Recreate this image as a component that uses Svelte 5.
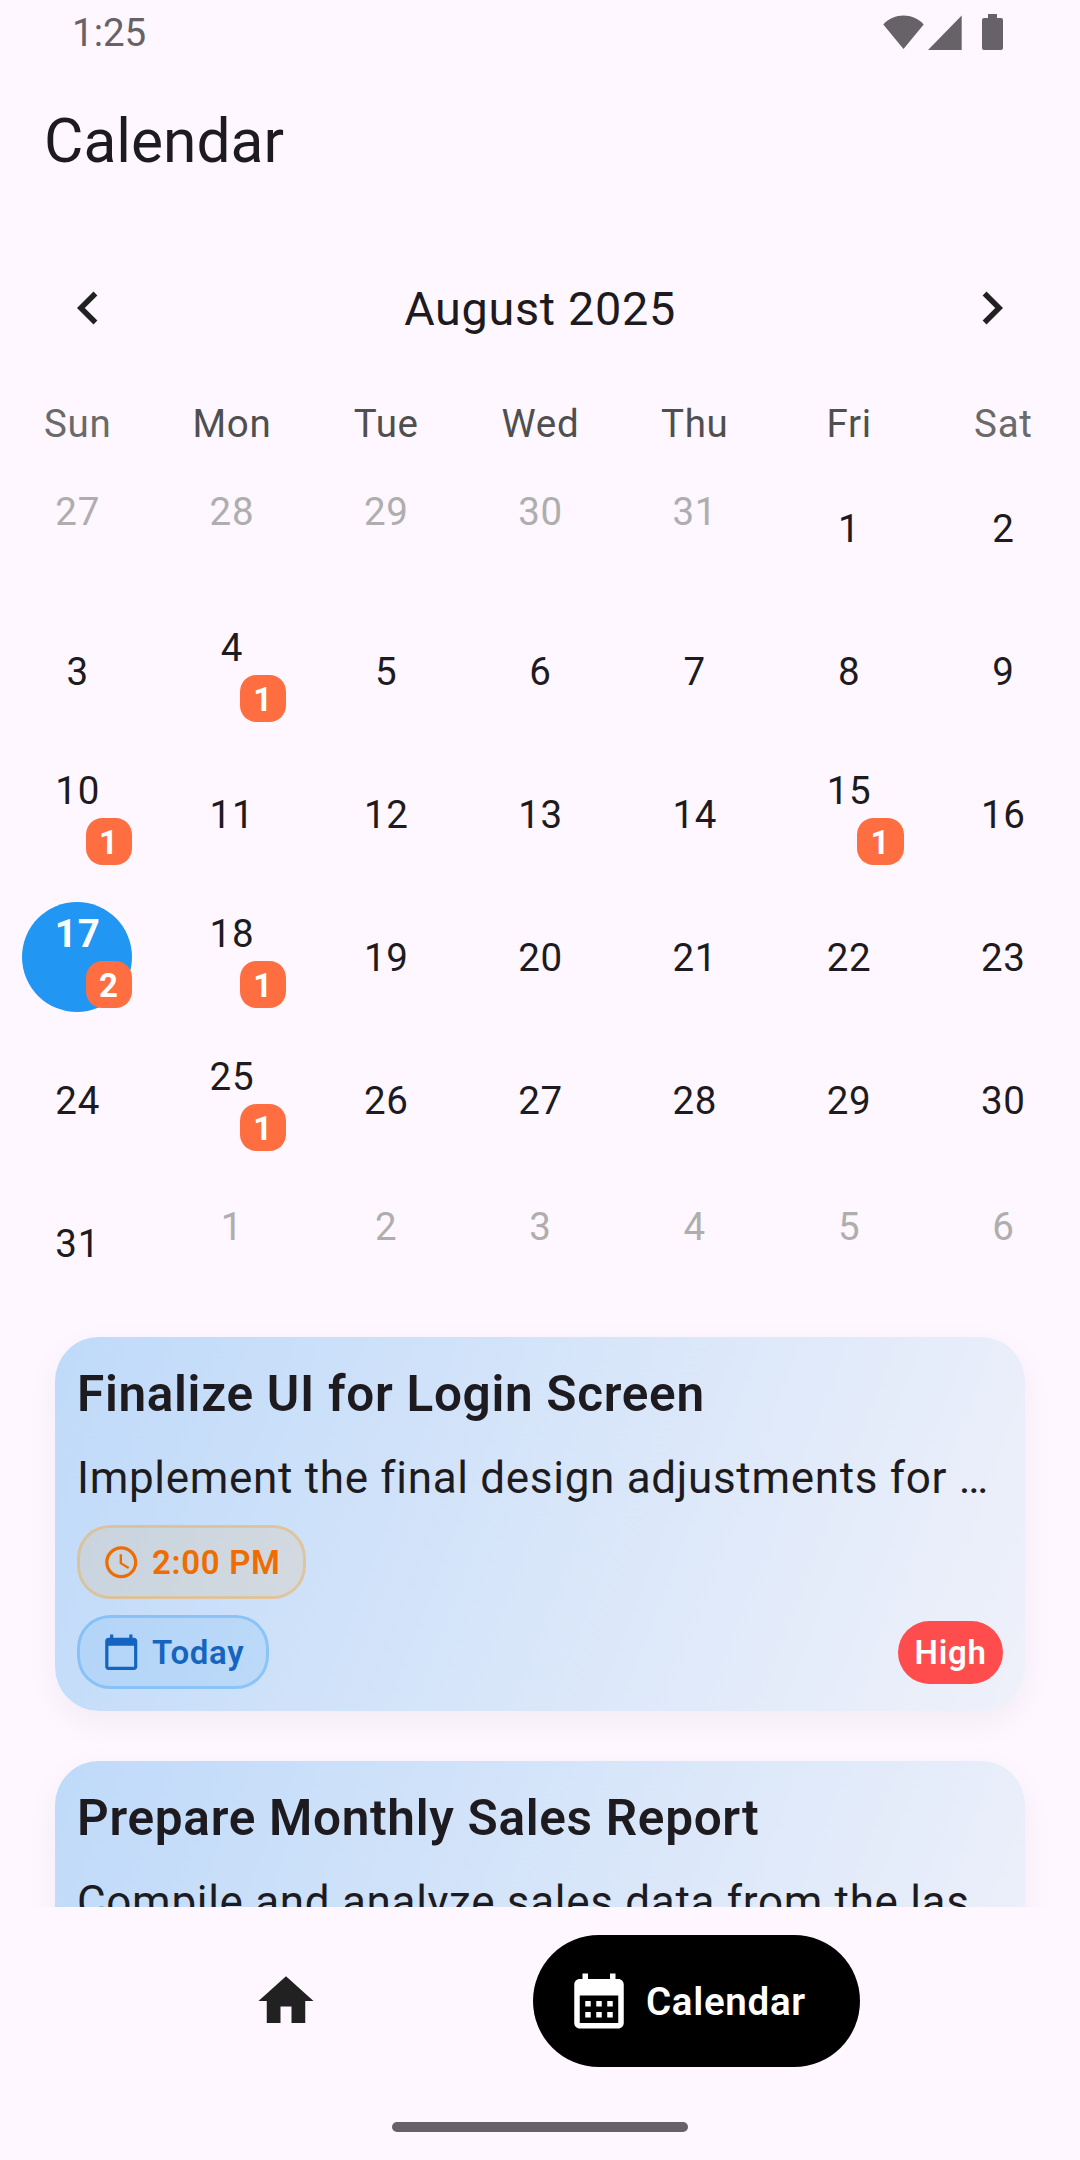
<script>
  const weekdays = ['Sun', 'Mon', 'Tue', 'Wed', 'Thu', 'Fri', 'Sat'];
  const events = { 4: 1, 10: 1, 15: 1, 17: 2, 18: 1, 25: 1 };
  const selected = 17;

  const days = [
    ...[27, 28, 29, 30, 31].map((n) => ({ n, outside: true })),
    ...Array.from({ length: 31 }, (_, i) => ({ n: i + 1, outside: false })),
    ...[1, 2, 3, 4, 5, 6].map((n) => ({ n, outside: true }))
  ];

  const tasks = [
    {
      title: 'Finalize UI for Login Screen',
      text: 'Implement the final design adjustments for …',
      time: '2:00 PM',
      day: 'Today',
      priority: 'High'
    },
    {
      title: 'Prepare Monthly Sales Report',
      text: 'Compile and analyze sales data from the las…'
    }
  ];
</script>

<div class="screen">
  <div class="status">
    <span class="clock">1:25</span>
    <svg class="status-icons" viewBox="0 0 121 36" aria-hidden="true">
      <path d="M1.3 10.4 C12 -1.5 31 -1.5 41.7 10.4 L21.5 35 Z" />
      <path d="M79.7 1.5 V36 H46 Z" />
      <path d="M106 0 h9 v4 h4 q2 0 2 2 v28 q0 2 -2 2 h-17 q-2 0 -2 -2 v-28 q0 -2 2 -2 h4 z" />
    </svg>
  </div>

  <h1>Calendar</h1>

  <div class="month">
    <svg viewBox="0 0 24 24" aria-hidden="true"><path d="M15.41 7.41L14 6l-6 6 6 6 1.41-1.41L10.83 12z" /></svg>
    <span>August 2025</span>
    <svg viewBox="0 0 24 24" aria-hidden="true"><path d="M10 6L8.59 7.41 13.17 12l-4.58 4.59L10 18l6-6z" /></svg>
  </div>

  <div class="weekdays">
    {#each weekdays as name, i}
      <span class:weekend={i === 0 || i === 6}>{name}</span>
    {/each}
  </div>

  <div class="days">
    {#each days as day}
      {@const count = day.outside ? 0 : events[day.n]}
      <div
        class="day"
        class:outside={day.outside}
        class:marked={count}
        class:selected={!day.outside && day.n === selected}
      >
        <div class="disc">
          <span class="number">{day.n}</span>
          {#if count}<span class="badge">{count}</span>{/if}
        </div>
      </div>
    {/each}
  </div>

  <main class="tasks">
    {#each tasks as task}
      <article>
        <h2>{task.title}</h2>
        <p>{task.text}</p>
        {#if task.time}
          <div class="chip time">
            <svg viewBox="0 0 24 24" aria-hidden="true"><path d="M11.99 2C6.47 2 2 6.48 2 12s4.47 10 9.99 10C17.52 22 22 17.52 22 12S17.52 2 11.99 2zM12 20c-4.42 0-8-3.58-8-8s3.58-8 8-8 8 3.58 8 8-3.58 8-8 8zm.5-13H11v6l5.25 3.15.75-1.23-4.5-2.67z" /></svg>
            <span>{task.time}</span>
          </div>
          <div class="foot">
            <div class="chip date">
              <svg viewBox="0 0 24 24" aria-hidden="true"><path d="M20 3h-1V1h-2v2H7V1H5v2H4c-1.1 0-2 .9-2 2v16c0 1.1.9 2 2 2h16c1.1 0 2-.9 2-2V5c0-1.1-.9-2-2-2zm0 18H4V8h16v13z" /></svg>
              <span>{task.day}</span>
            </div>
            <span class="priority">{task.priority}</span>
          </div>
        {/if}
      </article>
    {/each}
  </main>

  <nav>
    <div class="tabs">
      <svg class="home" viewBox="0 0 24 24" aria-hidden="true"><path d="M10 20v-6h4v6h5v-8h3L12 3 2 12h3v8z" /></svg>
      <div class="pill">
        <svg viewBox="0 0 24 24" aria-hidden="true"><path d="M19 4h-1V2h-2v2H8V2H6v2H5c-1.11 0-1.99.9-1.99 2L3 20c0 1.1.89 2 2 2h14c1.1 0 2-.9 2-2V6c0-1.1-.9-2-2-2zm0 16H5V10h14v10zM9 14H7v-2h2v2zm4 0h-2v-2h2v2zm4 0h-2v-2h2v2zm-8 4H7v-2h2v2zm4 0h-2v-2h2v2zm4 0h-2v-2h2v2z" /></svg>
        <span>Calendar</span>
      </div>
    </div>
    <div class="handle"></div>
  </nav>
</div>

<style>
  :global(body) {
    margin: 0;
    background: #fef7ff;
  }
  .screen {
    box-sizing: border-box;
    width: 1080px;
    height: 2160px;
    overflow: hidden;
    display: flex;
    flex-direction: column;
    background: #fef7ff;
    color: #1d1b20;
    font-family: Roboto, 'Liberation Sans', sans-serif;
  }
  svg {
    display: block;
    flex: none;
    fill: #212121;
  }
  .status {
    height: 66px;
    box-sizing: border-box;
    padding: 9px 77px 0 72px;
    display: flex;
    justify-content: space-between;
    align-items: flex-start;
    color: #666267;
  }
  .clock {
    font-size: 38.5px;
    line-height: 47px;
  }
  .status-icons {
    width: 121px;
    height: 36px;
    margin-top: 5px;
    fill: #666267;
  }
  h1 {
    margin: 0;
    height: 154px;
    padding: 0 44px;
    font-size: 60.5px;
    font-weight: 400;
    line-height: 152px;
  }
  .month {
    height: 176px;
    box-sizing: border-box;
    padding: 0 55px;
    display: flex;
    justify-content: space-between;
    align-items: center;
    font-size: 46.75px;
    letter-spacing: 0.69px;
  }
  .month span {
    padding-top: 2px;
  }
  .month svg {
    width: 66px;
    height: 66px;
  }
  .weekdays,
  .days {
    display: grid;
    grid-template-columns: repeat(7, 1fr);
    text-align: center;
    font-size: 38.5px;
    letter-spacing: 0.69px;
  }
  .weekdays {
    height: 60px;
    line-height: 56px;
    color: #4f4f4f;
  }
  .weekdays span {
    padding-left: 1px;
  }
  .weekdays .weekend {
    color: #6a6a6a;
  }
  .days {
    grid-auto-rows: 143px;
  }
  .day {
    display: flex;
    align-items: center;
    justify-content: center;
  }
  .disc {
    position: relative;
    width: 110px;
    height: 110px;
    border-radius: 50%;
    display: flex;
    justify-content: center;
    align-items: center;
  }
  .number {
    padding: 2px 0 0 1px;
    line-height: 46px;
  }
  .outside .disc {
    align-items: flex-start;
    color: #aeaeae;
  }
  .outside .number {
    padding-top: 16px;
  }
  .marked .disc {
    align-items: flex-start;
  }
  .marked .number {
    padding-top: 9px;
  }
  .selected .disc {
    background: #2196f3;
    color: #fff;
    font-weight: 700;
  }
  .badge {
    position: absolute;
    right: 0;
    bottom: 4px;
    width: 46.5px;
    height: 47px;
    border-radius: 16.5px;
    background: #ff6e40;
    color: #fff;
    font-size: 33px;
    font-weight: 700;
    line-height: 49px;
  }
  .tasks {
    flex: none;
    height: 593px;
    box-sizing: border-box;
    padding: 23px 55px 0;
    overflow: hidden;
    display: flex;
    flex-direction: column;
    gap: 50px;
  }
  article {
    flex: none;
    height: 374px;
    box-sizing: border-box;
    padding: 22px;
    border-radius: 44px;
    background: linear-gradient(111.08deg, #bfdaf9, #eff1fa);
    box-shadow: 0 11px 33px rgba(0, 0, 0, 0.05);
    display: flex;
    flex-direction: column;
    align-items: flex-start;
  }
  h2 {
    margin: 0;
    font-size: 49.5px;
    font-weight: 600;
    line-height: 70px;
    letter-spacing: 0.69px;
    white-space: nowrap;
  }
  p {
    margin: 12px 0 10px;
    font-size: 44px;
    line-height: 74px;
    letter-spacing: 0.69px;
    white-space: nowrap;
  }
  .chip {
    box-sizing: border-box;
    height: 74px;
    padding: 0 22px;
    border: 3px solid;
    border-radius: 33px;
    display: flex;
    align-items: center;
    gap: 11.5px;
    font-size: 33px;
    font-weight: 600;
    letter-spacing: 0.69px;
  }
  .chip svg {
    width: 38.5px;
    height: 38.5px;
    fill: currentColor;
  }
  .time {
    border-color: rgba(255, 152, 0, 0.3);
    background: rgba(255, 152, 0, 0.1);
    color: #ef6c00;
  }
  .date {
    border-color: rgba(33, 150, 243, 0.3);
    background: rgba(33, 150, 243, 0.1);
    color: #1565c0;
  }
  .foot {
    width: 100%;
    margin-top: 16px;
    display: flex;
    justify-content: space-between;
    align-items: center;
  }
  .priority {
    height: 63px;
    box-sizing: border-box;
    padding: 0 16.5px;
    border-radius: 33px;
    background: #ff4d4d;
    color: #fff;
    font-size: 33px;
    font-weight: 600;
    line-height: 64px;
    letter-spacing: 0.69px;
  }
  nav {
    flex: 1;
    padding-top: 28px;
    display: flex;
    flex-direction: column;
    align-items: center;
  }
  .tabs {
    width: 100%;
    display: flex;
    align-items: center;
  }
  .home {
    width: 66px;
    height: 66px;
    margin: 0 214px 0 253px;
  }
  .pill {
    box-sizing: border-box;
    width: 327px;
    height: 132px;
    padding-left: 33px;
    border-radius: 66px;
    background: #000;
    color: #fff;
    display: flex;
    align-items: center;
    gap: 14px;
    font-size: 38.5px;
    font-weight: 600;
    letter-spacing: 0.69px;
  }
  .pill svg {
    width: 66px;
    height: 66px;
    fill: #fff;
  }
  .handle {
    width: 296px;
    height: 10px;
    margin-top: 55px;
    border-radius: 5px;
    background: #666267;
  }
</style>
